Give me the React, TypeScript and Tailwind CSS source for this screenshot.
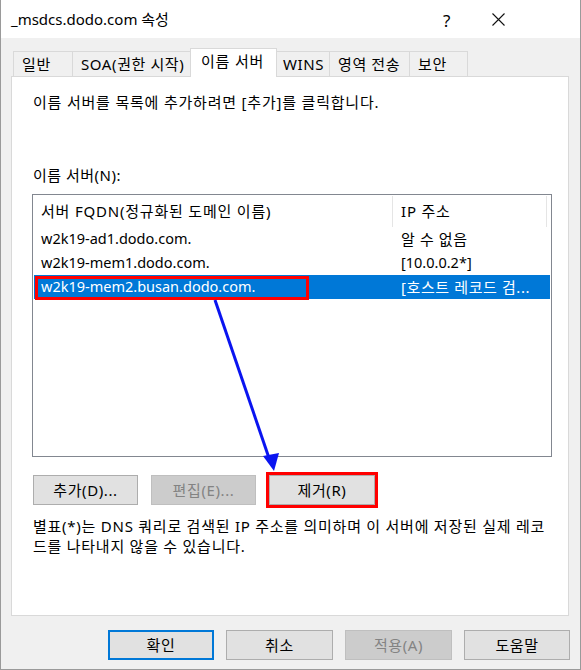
import React from "react";

const font = { fontFamily: '"Noto Sans", "Noto Sans CJK KR", sans-serif' };

function Tab({ label, selected, w }: { label: string; selected?: boolean; w: string }) {
  if (selected) {
    return (
      <div
        className={`${w} h-[29px] -mx-[2px] relative z-10 bg-white border border-b-0 border-[#d9d9d9] flex items-center pl-[10px] text-[15px] tracking-[0.8px] text-black -mb-px`}
      >
        <span className="-mt-[4px]">{label}</span>
      </div>
    );
  }
  return (
    <div
      className={`${w} h-[25px] bg-[#f0f0f0] border border-b-0 border-[#d9d9d9] -ml-px first:ml-0 flex items-center pl-[8px] text-[15px] tracking-[0.6px] text-black whitespace-nowrap`}
    >
      {label}
    </div>
  );
}

function Btn({
  label,
  disabled,
  focus,
  w = "w-[105px]",
}: {
  label: string;
  disabled?: boolean;
  focus?: boolean;
  w?: string;
}) {
  const base = `${w} h-[30px] flex items-center justify-center text-[15px] tracking-[0.6px]`;
  if (disabled)
    return <div className={`${base} bg-[#cccccc] border border-[#bfbfbf] text-[#838383]`}>{label}</div>;
  if (focus)
    return <div className={`${base} bg-[#e1e1e1] border-2 border-[#0078d7] text-black`}>{label}</div>;
  return <div className={`${base} bg-[#e1e1e1] border border-[#adadad] text-black`}>{label}</div>;
}

export default function App() {
  return (
    <div style={font} className="w-[581px] h-[670px] bg-[#f0f0f0] border-x border-b border-[#9a9a9a] relative overflow-hidden">
      {/* title bar */}
      <div className="h-[38px] bg-white flex items-center relative">
        <div className="pl-[10px] text-[15px] text-black">_msdcs.dodo.com 속성</div>
        <div className="absolute left-[442px] top-[8px] text-[17px] text-black">?</div>
        <svg className="absolute left-[491px] top-[13px]" width="13" height="13" viewBox="0 0 13 13">
          <path d="M0.5 0.5 L12.5 12.5 M12.5 0.5 L0.5 12.5" stroke="#111" strokeWidth="1.1" />
        </svg>
      </div>

      {/* tabs */}
      <div className="pt-[10px] px-[12px] flex items-end h-[38px]">
        <Tab label="일반" w="w-[60px]" />
        <Tab label="SOA(권한 시작)" w="w-[120px]" />
        <Tab label="이름 서버" w="w-[87px]" selected />
        <Tab label="WINS" w="w-[56px]" />
        <Tab label="영역 전송" w="w-[81px]" />
        <Tab label="보안" w="w-[59px]" />
      </div>

      {/* panel */}
      <div className="mx-[10px] w-[558px] h-[540px] bg-white border border-[#d9d9d9] relative text-[15px] tracking-[0.8px]">
        <div className="pl-[21px] pt-[15px] leading-[20px] text-black whitespace-nowrap">
          이름 서버를 목록에 추가하려면 [추가]를 클릭합니다.
        </div>
        <div className="pl-[21px] pt-[53px] leading-[20px] text-black tracking-[0.5px]">이름 서버(N):</div>

        {/* list */}
        <div className="ml-[20px] mt-[9px] w-[520px] h-[263px] border border-[#828790] bg-white p-px">
          <div className="h-[31px] flex items-center text-black">
            <div className="w-[359px] h-full flex items-center pl-[7px] border-r border-[#e5e5e5] whitespace-nowrap">
              서버 FQDN(정규화된 도메인 이름)
            </div>
            <div className="w-[154px] h-full flex items-center pl-[8px] border-r border-[#e5e5e5]">IP 주소</div>
          </div>
          {[
            ["w2k19-ad1.dodo.com.", "알 수 없음", false],
            ["w2k19-mem1.dodo.com.", "[10.0.0.2*]", false],
            ["w2k19-mem2.busan.dodo.com.", "[호스트 레코드 검...", true],
          ].map(([a, b, sel], i) => (
            <div
              key={a as string}
              className={`h-[24px] flex items-center ${sel ? "bg-[#0078d7] text-white" : "text-black"}`}
            >
              <div className="w-[359px] pl-[7px] whitespace-nowrap text-[14.5px] tracking-normal">{a}</div>
              <div className={`pl-[8px] whitespace-nowrap ${i === 1 ? "text-[14.5px] tracking-normal" : "tracking-[0.6px]"}`}>{b}</div>
            </div>
          ))}
        </div>

        {/* buttons */}
        <div className="ml-[21px] mt-[18px] flex gap-[13px] tracking-normal">
          <Btn label="추가(D)..." />
          <Btn label="편집(E)..." disabled />
          <div className="relative">
            <Btn label="제거(R)" w="w-[106px]" />
            <div className="absolute -inset-[3px] border-[3px] border-[#ff0000]" />
          </div>
        </div>

        <div className="pl-[21px] pt-[11px] leading-[20px] text-black whitespace-nowrap tracking-[0.75px]">
          별표(*)는 DNS 쿼리로 검색된 IP 주소를 의미하며 이 서버에 저장된 실제 레코
          <br />
          드를 나타내지 않을 수 있습니다.
        </div>
      </div>

      {/* bottom buttons */}
      <div className="flex justify-end gap-[12px] pr-[10px] pt-[14px]">
        <Btn label="확인" focus w="w-[106px]" />
        <Btn label="취소" w="w-[107px]" />
        <Btn label="적용(A)" disabled w="w-[107px]" />
        <Btn label="도움말" w="w-[106px]" />
      </div>

      {/* annotations */}
      <div className="absolute left-[34px] top-[276px] w-[274px] h-[24px] border-[3px] border-[#ff0000] pointer-events-none" />
      <svg className="absolute left-0 top-0 pointer-events-none" width="581" height="670">
        <line x1="214" y1="300" x2="268" y2="458" stroke="#0a14f0" strokeWidth="3" />
        <polygon points="273,471 262,456 278,453" fill="#0a14f0" />
      </svg>
    </div>
  );
}
